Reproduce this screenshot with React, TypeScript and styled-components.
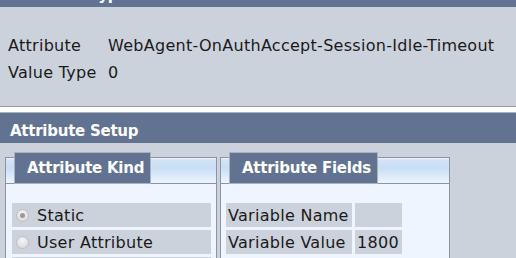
import React from "react";
import styled, { createGlobalStyle } from "styled-components";

const Global = createGlobalStyle`
  html, body { margin: 0; padding: 0; background: #ffffff; }
  body { font-family: "DejaVu Sans", Verdana, sans-serif; font-size: 16px; letter-spacing: 0.28px; color: #1a1a1a; overflow: hidden; }
`;

const Page = styled.div`
  display: flex;
  flex-direction: column;
`;

const SectionHeader = styled.div<{ $top?: boolean }>`
  height: 31px;
  box-sizing: border-box;
  background: #617391;
  border-top: 1px solid #aab3c1;
  color: #ffffff;
  font-weight: bold;
  font-size: 15px;
  letter-spacing: -0.25px;
  padding-left: 10px;
  display: flex;
  align-items: flex-end;
  padding-bottom: 3px;
  margin-top: ${(p) => (p.$top ? "-24px" : "0")};
`;

const InfoPanel = styled.div`
  background: #cbd2dc;
  height: 100px;
  box-sizing: border-box;
  border-bottom: 1px solid #9c9c9c;
  padding: 25px 0 0 8px;
  display: grid;
  grid-template-columns: 100px 1fr;
  grid-auto-rows: 27px;
  align-items: center;
`;

const Spacer = styled.div`
  height: 5px;
`;

const SetupPanel = styled.div`
  background: #cbd2dc;
  padding: 14px 0 0 5px;
  display: flex;
  gap: 3px;
  align-items: flex-start;
  height: 200px;
`;

const Box = styled.div<{ $w: number }>`
  width: ${(p) => p.$w}px;
  box-sizing: border-box;
  border: 1px solid #8d949d;
  background: #eef5ff;
  height: 160px;
  display: flex;
  flex-direction: column;
`;

const Strip = styled.div`
  height: 26px;
  box-sizing: border-box;
  border-bottom: 1px solid #8d949d;
  background: linear-gradient(#eef5ff 0px, #d2e4f6 2px, #c9def5 40%, #edf5ff 100%);
  position: relative;
`;

const Tab = styled.div`
  position: absolute;
  left: 8px;
  top: -6px;
  height: 32px;
  box-sizing: border-box;
  background: #617391;
  border: 1px solid #a9b2bf;
  color: #ffffff;
  font-weight: bold;
  font-size: 15px;
  letter-spacing: -0.25px;
  padding: 0 6px 0 12px;
  display: flex;
  align-items: center;
`;

const RowList = styled.div`
  padding: 19px 5px 0 6px;
  display: flex;
  flex-direction: column;
  gap: 3px;
`;

const KindRow = styled.div`
  height: 24px;
  background: #cbd2dc;
  display: flex;
  align-items: center;
  gap: 8px;
  padding-left: 4px;
  white-space: nowrap;
`;

const Radio = styled.span<{ $checked?: boolean }>`
  flex: none;
  width: 13px;
  height: 13px;
  border-radius: 50%;
  box-sizing: border-box;
  border: 1px solid #bdc0c5;
  background: radial-gradient(circle at 50% 35%, #f6f6f6, #d3d4d7);
  display: flex;
  align-items: center;
  justify-content: center;
  &::after {
    content: "";
    width: 5px;
    height: 5px;
    border-radius: 50%;
    background: ${(p) => (p.$checked ? "#9a9a9a" : "transparent")};
  }
`;

const FieldTable = styled.div`
  padding: 19px 0 0 5px;
  display: grid;
  grid-template-columns: 126px 47px;
  grid-auto-rows: 24px;
  gap: 3px;
`;

const Cell = styled.div`
  background: #cbd2dc;
  display: flex;
  align-items: center;
  padding-left: 2px;
  white-space: nowrap;
  overflow: hidden;
`;

export default function App() {
  return (
    <Page>
      <Global />
      <SectionHeader $top>Attribute Type</SectionHeader>
      <InfoPanel>
        <div>Attribute</div>
        <div>WebAgent-OnAuthAccept-Session-Idle-Timeout</div>
        <div>Value Type</div>
        <div>0</div>
      </InfoPanel>
      <Spacer />
      <SectionHeader>Attribute Setup</SectionHeader>
      <SetupPanel>
        <Box $w={212}>
          <Strip>
            <Tab>Attribute Kind</Tab>
          </Strip>
          <RowList>
            <KindRow><Radio $checked />Static</KindRow>
            <KindRow><Radio />User Attribute</KindRow>
            <KindRow><Radio />DN Attribute</KindRow>
          </RowList>
        </Box>
        <Box $w={230}>
          <Strip>
            <Tab>Attribute Fields</Tab>
          </Strip>
          <FieldTable>
            <Cell>Variable Name</Cell>
            <Cell></Cell>
            <Cell>Variable Value</Cell>
            <Cell>1800</Cell>
          </FieldTable>
        </Box>
      </SetupPanel>
    </Page>
  );
}
